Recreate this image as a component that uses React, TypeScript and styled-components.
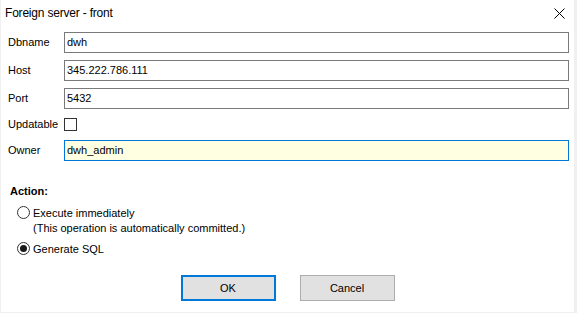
import React from "react";
import styled, { createGlobalStyle } from "styled-components";

const Global = createGlobalStyle`
  html, body { margin: 0; padding: 0; background: #ffffff; }
  body { font-family: "Segoe UI", "Liberation Sans", Arial, sans-serif; font-size: 11px; color: #000; }
  * { box-sizing: border-box; }
`;

const Window = styled.div`
  width: 577px;
  height: 313px;
  background: #ffffff;
  border-left: 1px solid #f0f0f0;
  border-right: 3px solid #f0f0f0;
  border-bottom: 1px solid #f0f0f0;
  display: flex;
  flex-direction: column;
`;

const TitleBar = styled.div`
  height: 27px;
  display: flex;
  align-items: center;
  justify-content: space-between;
  padding: 0 8px 1px 4px;
`;

const Title = styled.span`
  font-size: 12px;
  line-height: 15px;
  letter-spacing: -0.2px;
`;

const CloseButton = styled.button`
  border: 0;
  background: transparent;
  padding: 0;
  width: 12px;
  height: 12px;
  display: flex;
  align-items: center;
  justify-content: center;
  margin-top: 1px;
  margin-right: 1px;
`;

const Form = styled.div`
  display: flex;
  flex-direction: column;
  gap: 7px;
  padding: 5px 0 0 7px;
`;

const Row = styled.div<{ $h?: number }>`
  display: flex;
  align-items: center;
  height: ${(p) => p.$h ?? 21}px;
`;

const Label = styled.label`
  width: 56px;
  flex: none;
  line-height: 15px;
`;

const Input = styled.div<{ $focused?: boolean }>`
  width: 505px;
  height: 21px;
  border: 1px solid ${(p) => (p.$focused ? "#0078d7" : "#7a7a7a")};
  background: ${(p) => (p.$focused ? "#ffffe1" : "#ffffff")};
  padding: 0 2px;
  display: flex;
  align-items: center;
  line-height: 15px;
`;

const CheckBox = styled.span`
  width: 13px;
  height: 13px;
  border: 1px solid #333333;
  background: #ffffff;
  display: inline-block;
`;

const Section = styled.div`
  display: flex;
  flex-direction: column;
  padding: 23px 0 0 9px;
`;

const SectionTitle = styled.div`
  font-weight: bold;
  line-height: 15px;
  margin-bottom: 6px;
`;

const RadioRow = styled.div`
  display: flex;
  align-items: center;
  gap: 3px;
  padding-left: 7px;
  height: 15px;
`;

const RadioCircle = styled.span<{ $checked?: boolean }>`
  width: 13px;
  height: 13px;
  border-radius: 50%;
  border: 1px solid #333333;
  background: #ffffff;
  display: flex;
  align-items: center;
  justify-content: center;
  flex: none;
  &::after {
    content: "";
    display: ${(p) => (p.$checked ? "block" : "none")};
    width: 7px;
    height: 7px;
    border-radius: 50%;
    background: #1a1a1a;
  }
`;

const Note = styled.div`
  padding-left: 23px;
  line-height: 15px;
  margin-top: 1px;
  margin-bottom: 5px;
`;

const Buttons = styled.div`
  margin-top: auto;
  margin-bottom: 11px;
  display: flex;
  justify-content: center;
  gap: 24px;
  padding-left: 0;
`;

const Button = styled.button<{ $default?: boolean }>`
  width: 95px;
  height: 26px;
  background: #e1e1e1;
  border: ${(p) => (p.$default ? "2px solid #0078d7" : "1px solid #adadad")};
  font-family: inherit;
  font-size: 11px;
  color: #000;
  padding: 0;
`;

export default function App() {
  return (
    <>
      <Global />
      <Window>
        <TitleBar>
          <Title>Foreign server - front</Title>
          <CloseButton aria-label="Close">
            <svg width="11" height="11" viewBox="0 0 11 11">
              <path d="M0.5 0.5 L10.5 10.5 M10.5 0.5 L0.5 10.5" stroke="#000" strokeWidth="1" />
            </svg>
          </CloseButton>
        </TitleBar>
        <Form>
          <Row>
            <Label>Dbname</Label>
            <Input>dwh</Input>
          </Row>
          <Row>
            <Label>Host</Label>
            <Input>345.222.786.111</Input>
          </Row>
          <Row>
            <Label>Port</Label>
            <Input>5432</Input>
          </Row>
          <Row $h={17}>
            <Label>Updatable</Label>
            <CheckBox />
          </Row>
          <Row>
            <Label>Owner</Label>
            <Input $focused>dwh_admin</Input>
          </Row>
        </Form>
        <Section>
          <SectionTitle>Action:</SectionTitle>
          <RadioRow>
            <RadioCircle />
            <span>Execute immediately</span>
          </RadioRow>
          <Note>(This operation is automatically committed.)</Note>
          <RadioRow>
            <RadioCircle $checked />
            <span>Generate SQL</span>
          </RadioRow>
        </Section>
        <Buttons>
          <Button $default>OK</Button>
          <Button>Cancel</Button>
        </Buttons>
      </Window>
    </>
  );
}
